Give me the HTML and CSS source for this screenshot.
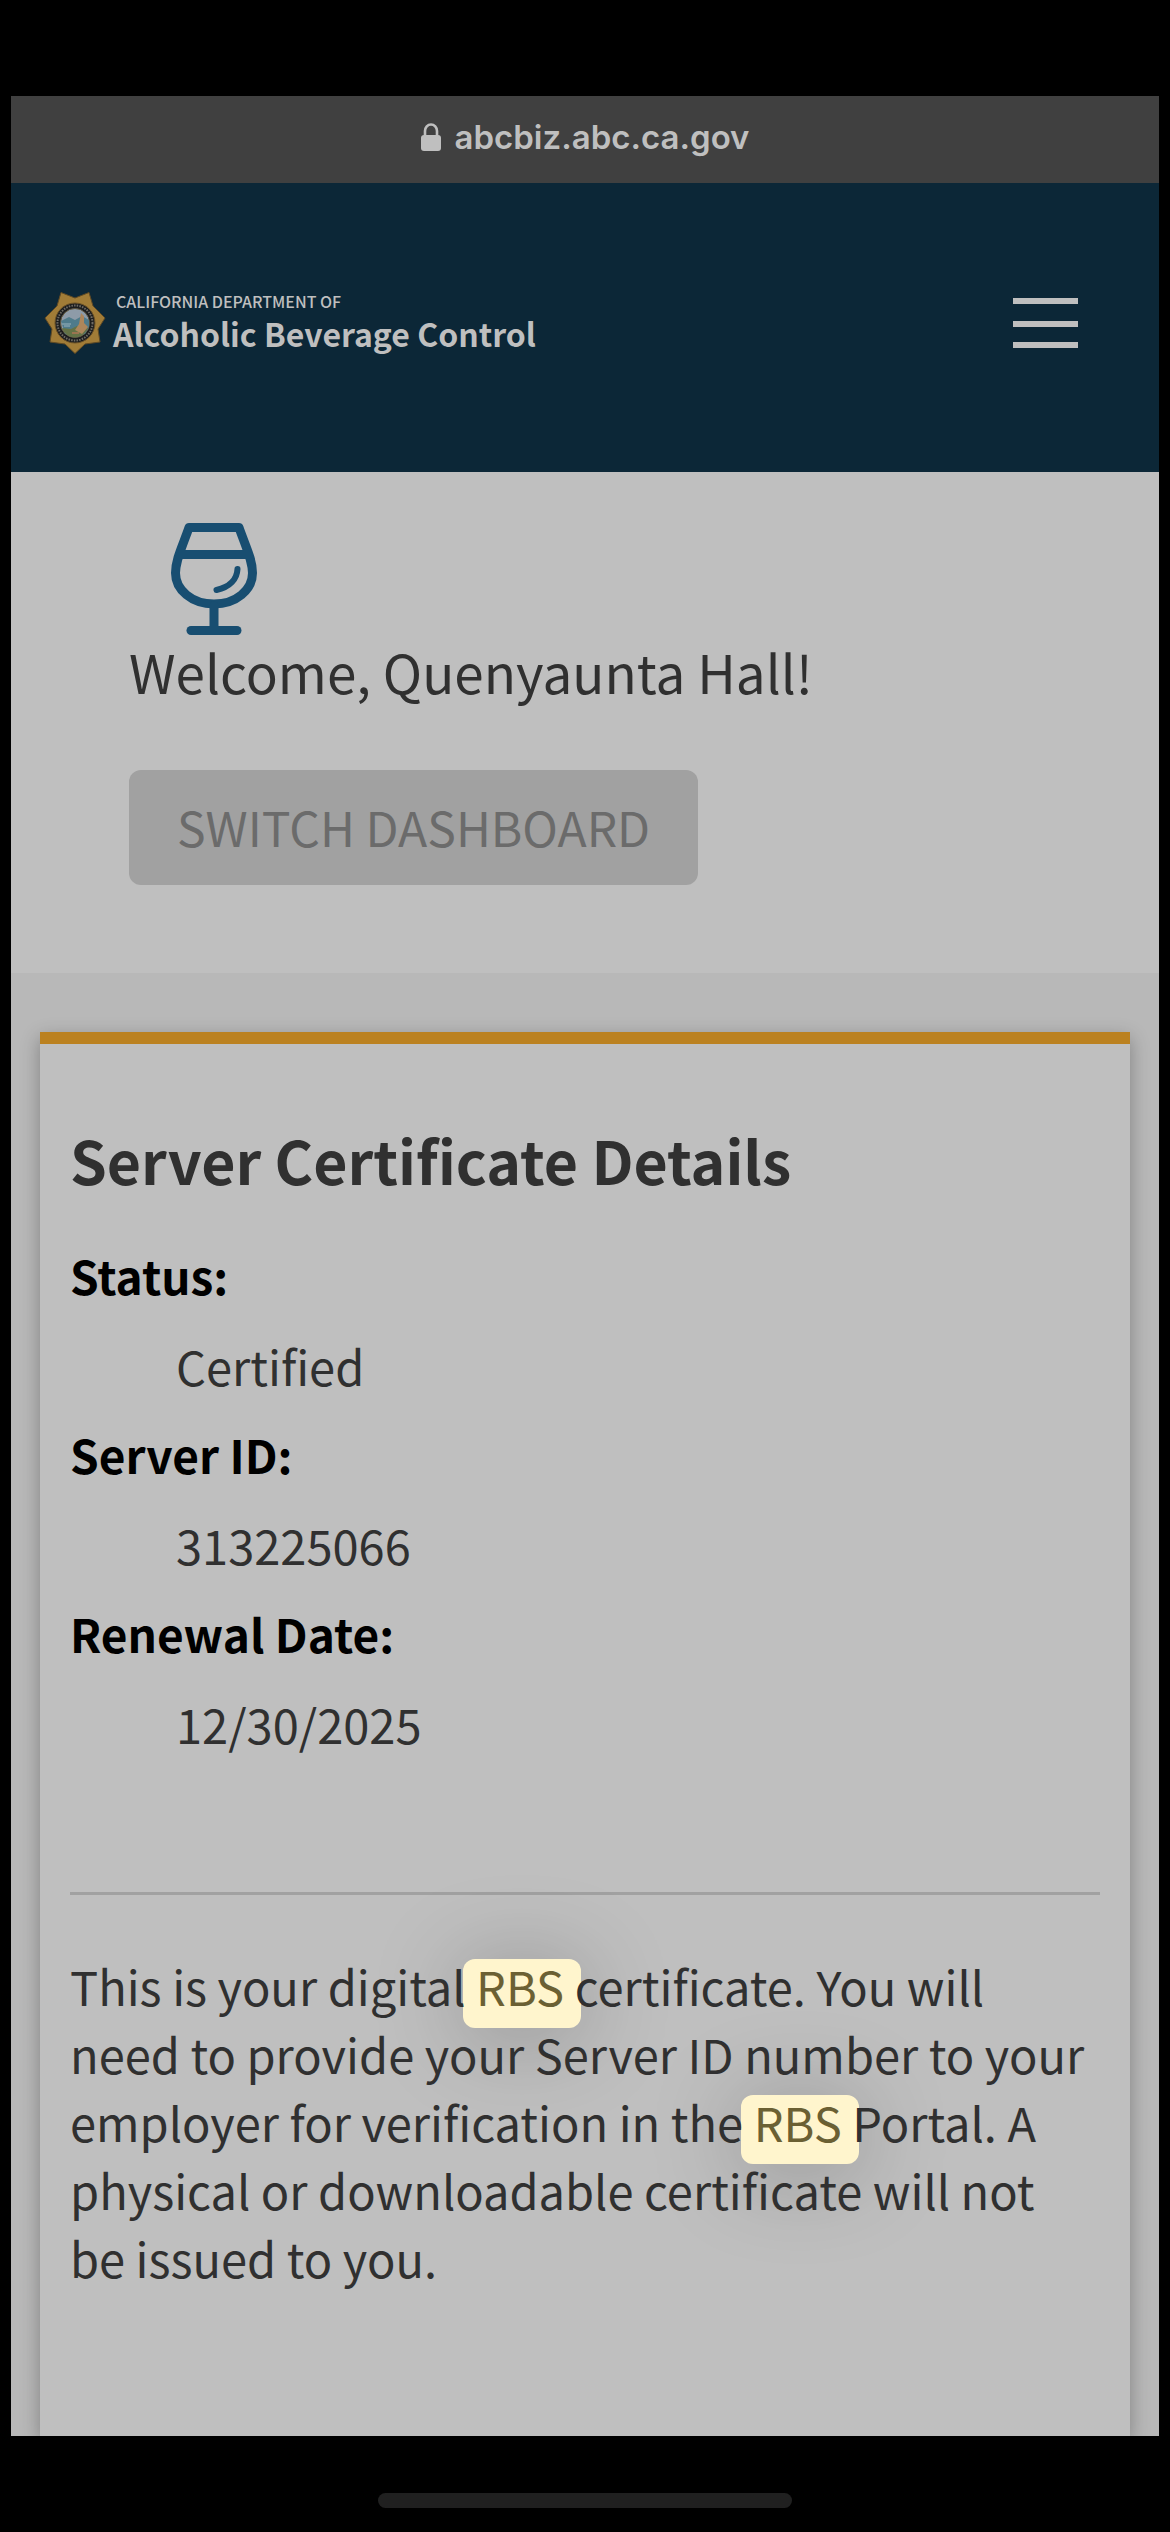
FILE: index.html
```html
<!DOCTYPE html>
<html lang="en">
  <head>
    <meta charset="UTF-8" />
    <meta name="viewport" content="width=device-width, initial-scale=1.0" />
    <title>Server Certificate Details</title>
    <link rel="stylesheet" href="styles.css">
  </head>
  <body>
    <div class="address-bar">
      <svg class="lock" viewBox="0 0 20 28" aria-hidden="true">
        <path d="M4 14V8a6 6.500 0 0 1 12 0v6" fill="none" stroke="currentColor" stroke-width="2.6" />
        <rect x="0" y="12" width="20" height="16" rx="3" fill="currentColor" />
      </svg>
      <span>abcbiz.abc.ca.gov</span>
    </div>

    <header class="site-header">
      <a class="brand" href="#">
        <svg class="badge" viewBox="0 0 62 62" aria-hidden="true">
          <!-- seven pointed star -->
          <path d="M17 0.5 L31 6 L45 0.5 L49 14 L61 26 L54 37 L56 50 L41 52 L31 61.5 L21 52 L6 50 L8 37 L1 26 L13 14 Z" fill="#a17c37" stroke="#604a24" />
          <circle cx="31" cy="31" r="20" fill="#1c1d1e" stroke="#6b5228" />
          <circle cx="31" cy="31" r="17.5" fill="none" stroke="#6f6b64" stroke-width="2" stroke-dasharray="1.5 1.2" />
          <circle cx="31" cy="31" r="14.5" fill="#8e9ba8" stroke="#5f533a" />
          <path d="M17 29 L25 25 L31 28 L38 24 L45 28 L45 35 L41 42 L31 45 L21 42 Z" fill="#4f7b8b" />
          <path d="M18 36 L27 37 L33 34 L44 36 A14 14 0 0 1 20 40 Z" fill="#647246" />
          <path d="M37 21 L40 24 L40 31 L44 35 L38 42 L31 38 L35 32 Z" fill="#ad865b" />
          <path d="M18 32h9M20 34h6" stroke="#9bb4bd" stroke-width="1" />
          <path d="M28 41h7" stroke="#9a7450" stroke-width="2" />
        </svg>
        <span class="brand-text">
          <span class="brand-small">CALIFORNIA DEPARTMENT OF</span>
          <span class="brand-name">Alcoholic Beverage Control</span>
        </span>
      </a>
      <button class="menu" type="button" aria-label="Menu">
        <svg viewBox="0 0 65 50" aria-hidden="true">
          <path d="M0 0h65v6H0zM0 23h65v6H0zM0 44h65v6H0z" fill="currentColor" />
        </svg>
      </button>
    </header>

    <section class="welcome">
      <svg class="glass" viewBox="0 0 88 112" fill="none" stroke="currentColor" stroke-linecap="round" stroke-linejoin="round" aria-hidden="true">
        <path d="M19 4.5H69C75 22 82.500 36 82.500 50C82.500 67 66 81 44 81S5.500 67 5.500 50C5.500 36 13 22 19 4.500Z" stroke-width="9" />
        <path d="M12 31.500H76" stroke-width="9" stroke-linecap="butt" />
        <path d="M67.500 46C67 56 60 64 46.500 67" stroke-width="6" />
        <path d="M44 83V105" stroke-width="9" />
        <path d="M21 107.500H67" stroke-width="9" />
      </svg>
      <p class="greeting">Welcome, Quenyaunta Hall!</p>
      <button class="switch" type="button" disabled>SWITCH DASHBOARD</button>
    </section>

    <main class="dashboard">
      <article class="card">
        <h1>Server Certificate Details</h1>
        <dl class="details">
          <dt>Status:</dt>
          <dd>Certified</dd>
          <dt>Server ID:</dt>
          <dd>313225066</dd>
          <dt>Renewal Date:</dt>
          <dd>12/30/2025</dd>
        </dl>
        <hr />
        <p class="note">
          This is your digital <mark>RBS</mark> certificate. You will need to
          provide your Server ID number to your employer for verification in
          the <mark>RBS</mark> Portal. A physical or downloadable certificate
          will not be issued to you.
        </p>
      </article>
    </main>

    <footer class="bottom-bar">
      <div class="home-indicator"></div>
    </footer>
  </body>
</html>
```
FILE: styles.css
```css
* {
  box-sizing: border-box;
}

body {
  display: flex;
  flex-direction: column;
  min-height: 100vh;
  margin: 0;
  padding: 96px 11px 0;
  background: #000000;
  color: #303030;
  font-family: "Noto Sans CJK SC", "Noto Sans", sans-serif;
  font-size: 47px;
  line-height: 68px;
}

.address-bar {
  display: flex;
  justify-content: center;
  align-items: center;
  gap: 14px;
  height: 87px;
  padding-bottom: 6px;
  background: #404040;
  color: #bfbfbf;
  font-family: Inter, sans-serif;
  font-size: 33px;
  font-weight: 600;
}
.lock {
  width: 20px;
  height: 28px;
}

/* header */
.site-header {
  display: flex;
  justify-content: space-between;
  align-items: center;
  padding: 108px 81px 118px 33px;
  background: #0c2737;
}
.brand {
  display: flex;
  align-items: flex-end;
  gap: 7px;
  color: #bfbfbf;
  text-decoration: none;
}
.badge {
  width: 62px;
  height: 62px;
}
.brand-text {
  display: flex;
  flex-direction: column;
}
.brand-small {
  padding-left: 3px;
  font-size: 16px;
  font-weight: 500;
  line-height: 21px;
}
.brand-name {
  font-size: 32px;
  font-weight: 700;
  line-height: 42px;
}
.menu {
  padding: 0;
  border: 0;
  background: none;
  color: #bfbfbf;
}
.menu svg {
  display: block;
  width: 65px;
  height: 50px;
}

/* welcome */
.welcome {
  padding: 51px 118px 88px;
  background: #bfbfbf;
}
.glass {
  display: block;
  width: 88px;
  height: 112px;
  margin-left: 41px;
  color: #184e71;
}
.greeting {
  margin: 0 0 63px;
  font-size: 53px;
  line-height: 72px;
}
.switch {
  display: block;
  padding: 22px 48px 25px;
  border: 0;
  border-radius: 12px;
  background: #a1a1a1;
  color: #6b6b6b;
  font: inherit;
  font-size: 48px;
}

/* certificate */
.dashboard {
  display: flex;
  flex-direction: column;
  flex-grow: 1;
  padding: 59px 29px 0;
  background: #b8b8b8;
  overflow: hidden;
}
.card {
  flex-grow: 1;
  padding: 74px 30px 143px;
  border-top: 12px solid #bb8120;
  background: #bfbfbf;
  box-shadow: 0 6px 18px rgba(0, 0, 0, 0.3);
}
h1 {
  margin: 0 0 39px;
  font-size: 59px;
  font-weight: 600;
  line-height: 84px;
}
.details {
  margin: 0;
  padding-bottom: 114px;
}
.details dt {
  margin-bottom: 23px;
  color: #000000;
  font-size: 46px;
  font-weight: 600;
}
.details dd {
  margin: 0 0 20px 106px;
}
hr {
  height: 3px;
  margin: 0 0 57px;
  border: 0;
  background: #a1a1a1;
}
.note {
  margin: 0;
  isolation: isolate;
}

/* the yellow box sits behind the text so the next letters stay readable */
mark {
  position: relative;
  background: none;
  color: #6b6033;
}
mark::before {
  content: "";
  position: absolute;
  z-index: -1;
  top: 8px;
  right: -17px;
  bottom: -8px;
  left: -13px;
  border-radius: 12px;
  background: #fff5cd;
  box-shadow: 0 8px 90px rgba(0, 0, 0, 0.25);
}

.bottom-bar {
  display: flex;
  justify-content: center;
  padding: 57px 0 24px;
  background: #000000;
}
.home-indicator {
  width: 36%;
  height: 15px;
  border-radius: 8px;
  background: #202020;
}
```
